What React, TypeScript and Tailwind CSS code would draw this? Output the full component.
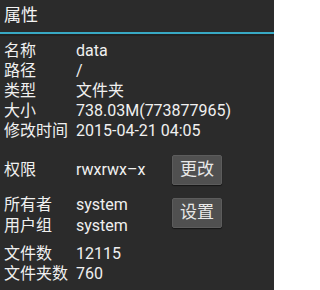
import React from "react"

const font = { fontFamily: '"Roboto", "Noto Sans CJK SC", sans-serif' }

const Row: React.FC<{ label: string; value: string; tall?: boolean }> = ({ label, value, tall }) => (
  <div className={tall ? "flex h-[21px] items-center" : "flex h-[20px] items-center"}>
    <span className="w-[72px] shrink-0 whitespace-nowrap">{label}</span>
    <span className="whitespace-nowrap">{value}</span>
  </div>
)

const Btn: React.FC<{ text: string; className?: string }> = ({ text, className }) => (
  <button
    className={
      "ml-auto mr-[48px] h-[30px] w-[50px] rounded-[2px] border border-[#5c5c5c] bg-[#505050] text-[17px] text-[#e8e8e8] shadow-[0_1px_1px_rgba(0,0,0,0.5)] " +
      (className ?? "")
    }
  >
    {text}
  </button>
)

const App: React.FC = () => {
  return (
    <div className="h-[290px] w-[274px] overflow-hidden bg-[#2b2b2b] text-[16px] text-[#f0f0f0]" style={font}>
      <div className="flex h-[32px] items-center px-[4px] text-[17px] text-[#f4f4f4]">属性</div>
      <div className="h-[2px] bg-[#38a9c4]" />
      <div className="h-[2px] bg-[#222222]" />

      <div className="flex flex-col px-[4px] pt-[5px]">
        <Row label="名称" value="data" />
        <Row label="路径" value="/" />
        <Row label="类型" value="文件夹" />
        <Row label="大小" value="738.03M(773877965)" />
        <Row label="修改时间" value="2015-04-21 04:05" />

        <div className="mt-[14px] flex h-[30px] items-center">
          <span className="w-[72px] shrink-0">权限</span>
          <span>rwxrwx–x</span>
          <Btn text="更改" />
        </div>

        <div className="mt-[9px] flex items-start">
          <div className="flex flex-col">
            <Row label="所有者" value="system" tall />
            <Row label="用户组" value="system" tall />
          </div>
          <Btn text="设置" className="mt-[4px]" />
        </div>

        <div className="mt-[8px] flex flex-col">
          <Row label="文件数" value="12115" />
          <Row label="文件夹数" value="760" />
        </div>
      </div>
    </div>
  )
}

export default App
